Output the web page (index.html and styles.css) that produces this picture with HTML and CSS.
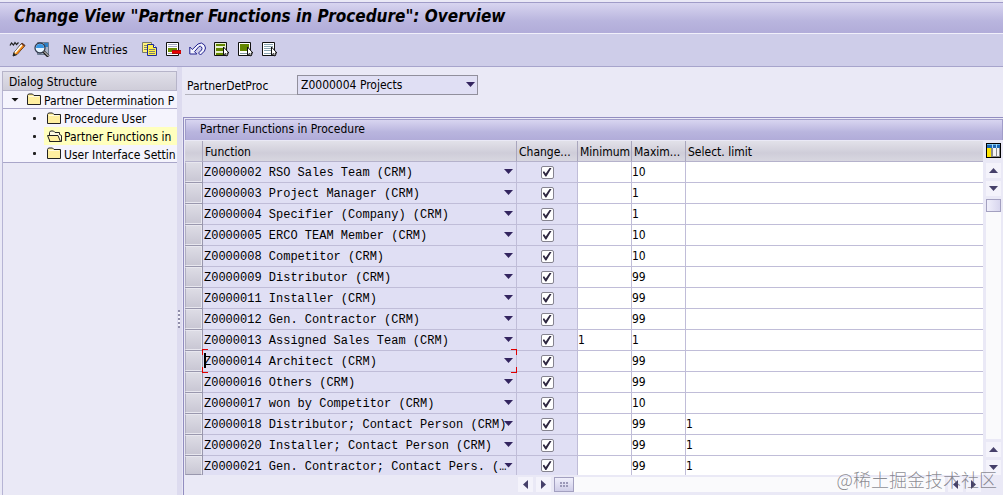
FILE: index.html
```html
<!DOCTYPE html>
<html lang="en">

<head>
    <meta charset="UTF-8">
    <meta name="viewport" content="width=device-width, initial-scale=1.0">
    <title>Change View "Partner Functions in Procedure": Overview</title>
    <link rel="stylesheet" href="styles.css">
</head>

<body>
    <h1 class="title">Change View "Partner Functions in Procedure": Overview</h1>

    <div class="toolbar">
        <button type="button" class="tool" aria-label="Display or change">
            <svg width="18" height="16" viewBox="0 0 18 16">
                <path d="M1 4.500l1.500-2.500 2 2 1.500-2.500 1.500 2 2-2" fill="none" stroke="#222" stroke-width="1.200" />
                <path d="M5 11.500L13 2l3 2.500L8 13.500l-4 1.500z" fill="#f7b040" stroke="#222" />
                <path d="M6 11.500L13.500 3" stroke="#fff" stroke-width="1.500" />
                <path d="M7.500 13l7.500-8.500" stroke="#ee7b12" stroke-width="1.300" />
                <path d="M12.500 2.500l3 2.500" stroke="#7a3b20" stroke-width="1.500" />
                <path d="M4 15l1-3 2 2z" fill="#222" />
            </svg>
        </button>
        <button type="button" class="tool" aria-label="Details">
            <svg width="18" height="16" viewBox="0 0 18 16">
                <path d="M4.500 1.500h11v12h-11z" fill="#aab4c6" stroke="#6c7c94" />
                <path d="M11 2h4v4h-4z" fill="#2e7fc4" />
                <circle cx="7" cy="7" r="5" fill="#e6f4ff" stroke="#333c50" stroke-width="1.300" />
                <path d="M3 7a4 4 0 0 1 8 0z" fill="#3796e4" />
                <path d="M10.500 10.500l5 5" stroke="#222" stroke-width="3" />
                <path d="M11 10.500l4.500 4.500" stroke="#fff" />
            </svg>
        </button>
        <button type="button" class="text-tool">New Entries</button>
        <button type="button" class="tool" aria-label="Copy as">
            <svg width="16" height="16" viewBox="0 0 16 16">
                <path d="M1.500 1.500h9v10h-9z" fill="#fff27a" stroke="#777a68" />
                <path d="M3 4.500h3M3 6.500h3M3 8.500h3" stroke="#8a8a60" />
                <path d="M6.500 3.500h6l3 3v8h-9z" fill="#fff04a" stroke="#1c2a96" />
                <path d="M12.500 3.500v3h3" fill="#fff" stroke="#1c2a96" />
                <path d="M8 8.500h6M8 10.500h6M8 12.500h6" stroke="#7b8070" />
            </svg>
        </button>
        <button type="button" class="tool" aria-label="Delete">
            <svg width="16" height="16" viewBox="0 0 16 16">
                <path d="M1.500 1.500h12v13h-12z" fill="#fff" stroke="#111" />
                <path d="M3 3h9v1H3zM3 5h9v1H3zM3 12h6v1H3z" fill="#a5a9c2" />
                <path d="M3 7h9v4H3z" fill="#6b8e00" />
                <path d="M7 9h9v4H7z" fill="#e80000" />
                <path d="M7 9h9v1H7zM7 12h9v1H7z" fill="#a01010" />
            </svg>
        </button>
        <button type="button" class="tool" aria-label="Undo change">
            <svg width="17" height="16" viewBox="0 0 17 16">
                <path d="M.8 6v7h7l-2.300-2.300 4.500-5.200q1.500-.8 2.500.5 1 1.500 0 3l-3 3 2 2 4-4q2-3 0-6-3-3.500-6.500-1L3.300 8.500z" fill="#f4f4ff" stroke="#20208e" />
            </svg>
        </button>
        <button type="button" class="tool" aria-label="Select all">
            <svg width="16" height="16" viewBox="0 0 16 16">
                <path d="M1.500 1.500h12v13h-12z" fill="#e8efd0" stroke="#111" />
                <path d="M3 3h9v2H3zM3 7h9v3H3zM3 12h7v2H3z" fill="#638600" />
                <path d="M10.500 6v8l2-1.500 1 2.500 1.500-1-1-2h2z" fill="#fff" stroke="#111" />
            </svg>
        </button>
        <button type="button" class="tool" aria-label="Select block">
            <svg width="16" height="16" viewBox="0 0 16 16">
                <path d="M1.500 1.500h12v13h-12z" fill="#fff" stroke="#111" />
                <path d="M3 3h9v7H3z" fill="#638600" />
                <path d="M3 12.500h7" stroke="#8299a0" />
                <path d="M10.500 6v8l2-1.500 1 2.500 1.500-1-1-2h2z" fill="#fff" stroke="#111" />
            </svg>
        </button>
        <button type="button" class="tool" aria-label="Deselect all">
            <svg width="16" height="16" viewBox="0 0 16 16">
                <path d="M1.500 1.500h12v13h-12z" fill="#fff" stroke="#111" />
                <path d="M3 3.500h9M3 5.500h9M3 7.500h9M3 9.500h7M3 12.500h7" stroke="#8aa5b2" />
                <path d="M10.500 6v8l2-1.500 1 2.500 1.500-1-1-2h2z" fill="#fff" stroke="#111" />
            </svg>
        </button>
    </div>

    <main class="work-area">
        <nav class="sidebar">
            <h2 class="sidebar-title">Dialog Structure</h2>
            <ul class="tree">
                <li class="node root">
                    <span class="expander"></span>
                    <svg class="folder" width="15" height="13" viewBox="0 0 15 13"><path d="M.5 11.500v-9l1-1.500h4l1.500 1.500h6.500v9z" fill="#ffefa0" stroke="#222" /><path d="M2 3.500h10" stroke="#fffbe0" /></svg>
                    <a href="#">Partner Determination P</a>
                </li>
                <li class="node">
                    <span class="bullet"></span>
                    <svg class="folder" width="15" height="13" viewBox="0 0 15 13"><path d="M.5 11.500v-9l1-1.500h4l1.500 1.500h6.500v9z" fill="#ffefa0" stroke="#222" /><path d="M2 3.500h10" stroke="#fffbe0" /></svg>
                    <a href="#">Procedure User</a>
                </li>
                <li class="node selected">
                    <span class="bullet"></span>
                    <svg class="folder" width="15" height="13" viewBox="0 0 15 13"><path d="M2.500 11.500v-9l1-1.500h3l1.500 1.500h4.500v2l2 1v6z" fill="#fffbe0" stroke="#222" /><path d="M.5 5.500h10.500l2.500 6H3z" fill="#ffefa0" stroke="#222" /></svg>
                    <a href="#">Partner Functions in</a>
                </li>
                <li class="node">
                    <span class="bullet"></span>
                    <svg class="folder" width="15" height="13" viewBox="0 0 15 13"><path d="M.5 11.500v-9l1-1.500h4l1.500 1.500h6.500v9z" fill="#ffefa0" stroke="#222" /><path d="M2 3.500h10" stroke="#fffbe0" /></svg>
                    <a href="#">User Interface Settin</a>
                </li>
            </ul>
        </nav>
        <div class="splitter"><span class="grip"></span></div>

        <section class="content">
            <div class="field">
                <label for="procedure">PartnerDetProc</label>
                <div class="dropdown">
                    <select id="procedure">
                        <option>Z0000004 Projects</option>
                    </select>
                </div>
            </div>

            <div class="group">
                <h2 class="group-title">Partner Functions in Procedure</h2>
                <div class="grid">
                    <table>
                        <colgroup>
                            <col class="col-row">
                            <col class="col-function">
                            <col class="col-change">
                            <col class="col-number">
                            <col class="col-number">
                            <col>
                        </colgroup>
                        <thead>
                            <tr>
                                <th></th>
                                <th>Function</th>
                                <th>Change...</th>
                                <th>Minimum</th>
                                <th>Maxim...</th>
                                <th>Select. limit</th>
                            </tr>
                        </thead>
                        <tbody id="rows"></tbody>
                    </table>
                    <div class="v-side">
                        <button type="button" class="config" aria-label="Table settings">
                            <svg width="15" height="15" viewBox="0 0 15 15" shape-rendering="crispEdges">
                                <path d="M0 0h15v15H0z" fill="#000" />
                                <path d="M1 1h13v13H1z" fill="#8a8a8a" />
                                <path d="M1 1h13v1H1z" fill="#6cb8e8" />
                                <path d="M1 2h13v3H1z" fill="#1c66b4" />
                                <path d="M1 5h4v9H1z" fill="#ffe600" />
                                <path d="M7 5h3v8H7zM11 5h2v8h-2z" fill="#f4f4f4" />
                                <path d="M6 1h1v4H6zM10 1h1v4h-1z" fill="#a8dcf8" />
                            </svg>
                        </button>
                        <div class="v-scroll">
                            <button type="button" class="arrow up" aria-label="Page up"></button>
                            <button type="button" class="arrow down" aria-label="Line down"></button>
                            <div class="v-track"><span class="v-thumb"></span></div>
                            <button type="button" class="arrow up" aria-label="Line up"></button>
                            <button type="button" class="arrow down" aria-label="Page down"></button>
                        </div>
                    </div>
                </div>
                <div class="h-scroll">
                    <button type="button" class="arrow left" aria-label="First column"></button>
                    <button type="button" class="arrow right" aria-label="Column right"></button>
                    <div class="h-track"><span class="h-thumb"></span></div>
                    <button type="button" class="arrow left" aria-label="Column left"></button>
                    <button type="button" class="arrow right" aria-label="Last column"></button>
                </div>
            </div>
        </section>
    </main>
    <div class="watermark" lang="zh">@稀土掘金技术社区</div>

    <script>
        // name, minimum, maximum, select. limit
        const functions = [
            ['Z0000002 RSO Sales Team (CRM)', '', '10', ''],
            ['Z0000003 Project Manager (CRM)', '', '1', ''],
            ['Z0000004 Specifier (Company) (CRM)', '', '1', ''],
            ['Z0000005 ERCO TEAM Member (CRM)', '', '10', ''],
            ['Z0000008 Competitor (CRM)', '', '10', ''],
            ['Z0000009 Distributor (CRM)', '', '99', ''],
            ['Z0000011 Installer (CRM)', '', '99', ''],
            ['Z0000012 Gen. Contractor (CRM)', '', '99', ''],
            ['Z0000013 Assigned Sales Team (CRM)', '1', '1', ''],
            ['Z0000014 Architect (CRM)', '', '99', ''],
            ['Z0000016 Others (CRM)', '', '99', ''],
            ['Z0000017 won by Competitor (CRM)', '', '10', ''],
            ['Z0000018 Distributor; Contact Person (CRM)', '', '99', '1'],
            ['Z0000020 Installer; Contact Person (CRM)', '', '99', '1'],
            ['Z0000021 Gen. Contractor; Contact Pers. (…', '', '99', '1']
        ];
        const focused = 9;

        document.getElementById('rows').innerHTML = functions.map(([name, min, max, limit], i) => `
            <tr class="${i === focused ? 'focused' : ''}">
                <td class="row-head"><button type="button" aria-label="Select row ${i + 1}"></button></td>
                <td class="key"><div class="dropdown"><select aria-label="Function"><option>${name}</option></select></div></td>
                <td class="check"><input type="checkbox" aria-label="Changeable" checked></td>
                <td><input type="text" aria-label="Minimum" value="${min}"></td>
                <td><input type="text" aria-label="Maximum" value="${max}"></td>
                <td><input type="text" aria-label="Select. limit" value="${limit}"></td>
            </tr>`).join('');
    </script>
</body>

</html>
```
FILE: styles.css
```css
* {
    box-sizing: border-box;
}

body {
    margin: 0;
    min-height: 100vh;
    display: flex;
    flex-direction: column;
    position: relative;
    background-color: #eae9f6;
    color: #000;
    font-family: "DejaVu Sans Condensed", "DejaVu Sans", sans-serif;
    font-size: 12px;
    line-height: 16px;
    overflow: hidden;
}

button, select, input {
    margin: 0;
    padding: 0;
    border: none;
    background: none;
    color: inherit;
    font: inherit;
    appearance: none;
    border-radius: 0;
}

a {
    color: inherit;
    text-decoration: none;
}

/* title and toolbar */
.title {
    margin: 2px 0 0;
    padding: 0 14px;
    height: 32px;
    border-top: 1px solid #a09cc8;
    border-bottom: 1px solid #f0effa;
    background: linear-gradient(#d8d5f0, #b9b5de 60%, #b1acd9);
    font-size: 17px;
    font-style: italic;
    line-height: 27px;
}

.toolbar {
    display: flex;
    align-items: center;
    gap: 8px;
    height: 33px;
    padding: 0 9px 2px;
    background-color: #cecde9;
    border-bottom: 1px solid #a7a4cc;
}

.tool {
    display: flex;
    width: 16px;
    height: 16px;
}

.tool svg {
    flex: none;
}

.text-tool {
    margin: 0 5px 0 6px;
    padding-top: 2px;
}

/* dialog structure tree */
.work-area {
    flex: 1;
    display: flex;
}

.sidebar {
    width: 177px;
    padding: 4px 0 0 2px;
    overflow: hidden;
}

.sidebar-title {
    margin: 0;
    padding-left: 6px;
    height: 20px;
    border: 1px solid #b6b4c9;
    background: linear-gradient(#e0dfe9, #cfcdd9);
    font-size: 12px;
    font-weight: normal;
    line-height: 20px;
}

.tree {
    margin: 0;
    padding: 0;
    height: calc(100% - 20px);
    border-left: 1px solid #b6b4d4;
    list-style: none;
}

.node {
    display: flex;
    align-items: center;
    height: 18px;
    padding-left: 29px;
    background-color: #f5f4fd;
    white-space: nowrap;
}

.node.root {
    padding-left: 8px;
    border-bottom: 1px solid #a9a6c9;
}

.node:last-child {
    border-bottom: 1px solid #a9a6c9;
}

.node.selected {
    background: linear-gradient(#ffffbe, #ffffbe) 41px 0 no-repeat #f5f4fd;
}

.folder {
    flex: none;
    margin-right: 2px;
}

.node a {
    padding-top: 2px;
}

.expander {
    flex: none;
    width: 8px;
    height: 4px;
    margin-right: 8px;
    background-color: #111;
    clip-path: polygon(0 0, 100% 0, 50% 100%);
}

.bullet {
    flex: none;
    width: 3px;
    height: 3px;
    margin: 0 11px 0 1px;
    background-color: #222;
    border-radius: 1px;
}

.splitter {
    display: flex;
    align-items: center;
    width: 5px;
    padding: 76px 0 0 1px;
    background-color: #dddbef;
}

.grip {
    width: 2px;
    height: 18px;
    background: repeating-linear-gradient(#8f8da8 0 2px, #f5f4fd 2px 4px);
}

/* header field */
.content {
    flex: 1;
    min-width: 0;
    padding-top: 8px;
}

.field {
    display: flex;
    padding-left: 3px;
}

.field label {
    width: 112px;
    height: 20px;
    padding-left: 2px;
    border-bottom: 1px solid #b5b4be;
    line-height: 22px;
}

.dropdown {
    position: relative;
}

.dropdown::after {
    content: "";
    position: absolute;
    right: 3px;
    top: calc(50% - 3px);
    width: 9px;
    height: 5px;
    background-color: #33245f;
    clip-path: polygon(0 0, 100% 0, 50% 100%);
    pointer-events: none;
}

.field select {
    width: 181px;
    height: 20px;
    padding-left: 3px;
    border: 1px solid #918f9c;
    background-color: #e0dff4;
}

/* table control */
.group {
    margin: 22px 0 0 1px;
    padding: 1px 0 0 1px;
    border: 1px solid #928dc0;
    border-right: none;
    border-bottom: none;
}

.group-title {
    margin: 0;
    padding-left: 14px;
    height: 21px;
    border: 1px solid #a19dca;
    border-bottom: none;
    background: linear-gradient(#d8d5f0, #b9b5de 60%, #b1acd9);
    font-size: 12px;
    font-weight: normal;
    line-height: 19px;
}

.grid {
    display: flex;
    padding-top: 1px;
}

table {
    flex: 1;
    width: 0;
    border-collapse: separate;
    border-spacing: 0;
    table-layout: fixed;
}

.col-row {
    width: 18px;
}

.col-function {
    width: 314px;
}

.col-change {
    width: 61px;
}

.col-number {
    width: 54px;
}

th {
    height: 21px;
    padding: 2px 0 0 2px;
    border-right: 1px solid #a9a6bd;
    border-bottom: 1px solid #b5b2cb;
    background: linear-gradient(#e2e1e9, #cfcdd9 60%, #d8d7e0);
    font-weight: normal;
    line-height: 18px;
    text-align: left;
    white-space: nowrap;
}

th:last-child {
    border-right: none;
}

td {
    height: 21px;
    padding: 0;
    border-right: 1px solid #c0bdd8;
    border-bottom: 1px solid #c0bdd8;
    background-color: #fff;
    line-height: 16px;
}

td:last-child {
    border-right: none;
}

tbody tr:last-child td {
    height: 19px;
    border-bottom: none;
}

.row-head {
    border-color: #9997ad;
}

.row-head button {
    display: block;
    width: 100%;
    height: 20px;
    border: 1px solid #e8e7ef;
    border-left-color: #b0aec2;
    background: linear-gradient(#dddce5, #c9c7d4);
}

tbody tr:last-child .row-head button {
    height: 19px;
    border-bottom-color: #9997ad;
}

.key, .check {
    background-color: #e0dff4;
}

.key {
    font-family: "Liberation Mono", monospace;
}

.key select {
    display: block;
    width: 100%;
    height: 16px;
    padding: 1px 8px 0 1px;
}

td input[type="text"] {
    display: block;
    width: 100%;
    height: 16px;
}

.check input {
    display: block;
    width: 13px;
    height: 13px;
    margin: 0 auto;
    border: 1px solid #85838f;
    border-radius: 2px;
    background-color: #fff;
}

.check input:checked::before {
    content: "";
    display: block;
    width: 9px;
    height: 9px;
    margin: 1px;
    background-color: #2e2740;
    clip-path: polygon(0 50%, 18% 42%, 36% 68%, 82% 0, 100% 5%, 43% 100%, 32% 100%);
}

/* input cursor and red corners of the focused cell */
.focused .dropdown::before {
    content: "";
    position: absolute;
    inset: -4px -1px -4px -1px;
    background:
        linear-gradient(#e00000, #e00000) 0 0 / 6px 1px,
        linear-gradient(#e00000, #e00000) 0 0 / 1px 6px,
        linear-gradient(#e00000, #e00000) 100% 0 / 6px 1px,
        linear-gradient(#e00000, #e00000) 100% 0 / 1px 6px,
        linear-gradient(#e00000, #e00000) 0 100% / 6px 1px,
        linear-gradient(#e00000, #e00000) 0 100% / 1px 6px,
        linear-gradient(#e00000, #e00000) 100% 100% / 6px 1px,
        linear-gradient(#e00000, #e00000) 100% 100% / 1px 6px,
        linear-gradient(#000, #000) 2px 4px / 2px 15px;
    background-repeat: no-repeat;
    pointer-events: none;
}

/* scrollbars */
.v-side {
    display: flex;
    flex-direction: column;
    width: 20px;
    padding: 1px 2px 0 3px;
}

.config {
    display: flex;
    height: 20px;
    padding-top: 1px;
}

.v-scroll {
    flex: 1;
    display: flex;
    flex-direction: column;
    gap: 3px;
    padding-top: 1px;
}

.arrow {
    display: flex;
    flex: none;
    align-items: center;
    justify-content: center;
    width: 15px;
    height: 15px;
    background-color: #f4f3fb;
}

.arrow::before {
    content: "";
    width: 9px;
    height: 5px;
    background-color: #46406a;
}

.up::before {
    clip-path: polygon(50% 0, 100% 100%, 0 100%);
}

.down::before {
    clip-path: polygon(0 0, 100% 0, 50% 100%);
}

.left::before, .right::before {
    width: 5px;
    height: 9px;
}

.left::before {
    clip-path: polygon(100% 0, 100% 100%, 0 50%);
}

.right::before {
    clip-path: polygon(0 0, 100% 50%, 0 100%);
}

.v-track {
    flex: 1;
    width: 15px;
    background-color: #fafafc;
}

.v-thumb {
    display: block;
    width: 15px;
    height: 13px;
    border: 1px solid #a3a0c0;
    background: linear-gradient(90deg, #f0effb, #d8d6ee);
}

.h-scroll {
    display: flex;
    gap: 3px;
    padding: 2px 22px 3px 333px;
}

.h-track {
    flex: 1;
    height: 15px;
    background-color: #fafafc;
}

.h-thumb {
    display: flex;
    align-items: center;
    justify-content: center;
    width: 20px;
    height: 15px;
    border: 1px solid #a3a0c0;
    background: linear-gradient(#f0effb, #cfcde8);
}

.h-thumb::before {
    content: "";
    width: 8px;
    height: 5px;
    background: repeating-linear-gradient(90deg, #9b98b8 0 2px, transparent 2px 3px);
    clip-path: polygon(0 0, 100% 0, 100% 40%, 0 40%, 0 60%, 100% 60%, 100% 100%, 0 100%);
}

.watermark {
    position: absolute;
    right: 6px;
    bottom: 4px;
    color: rgba(90, 90, 100, 0.7);
    font-family: "Noto Sans CJK SC", sans-serif;
    font-size: 18px;
    font-weight: 300;
    line-height: 24px;
    pointer-events: none;
}
```
